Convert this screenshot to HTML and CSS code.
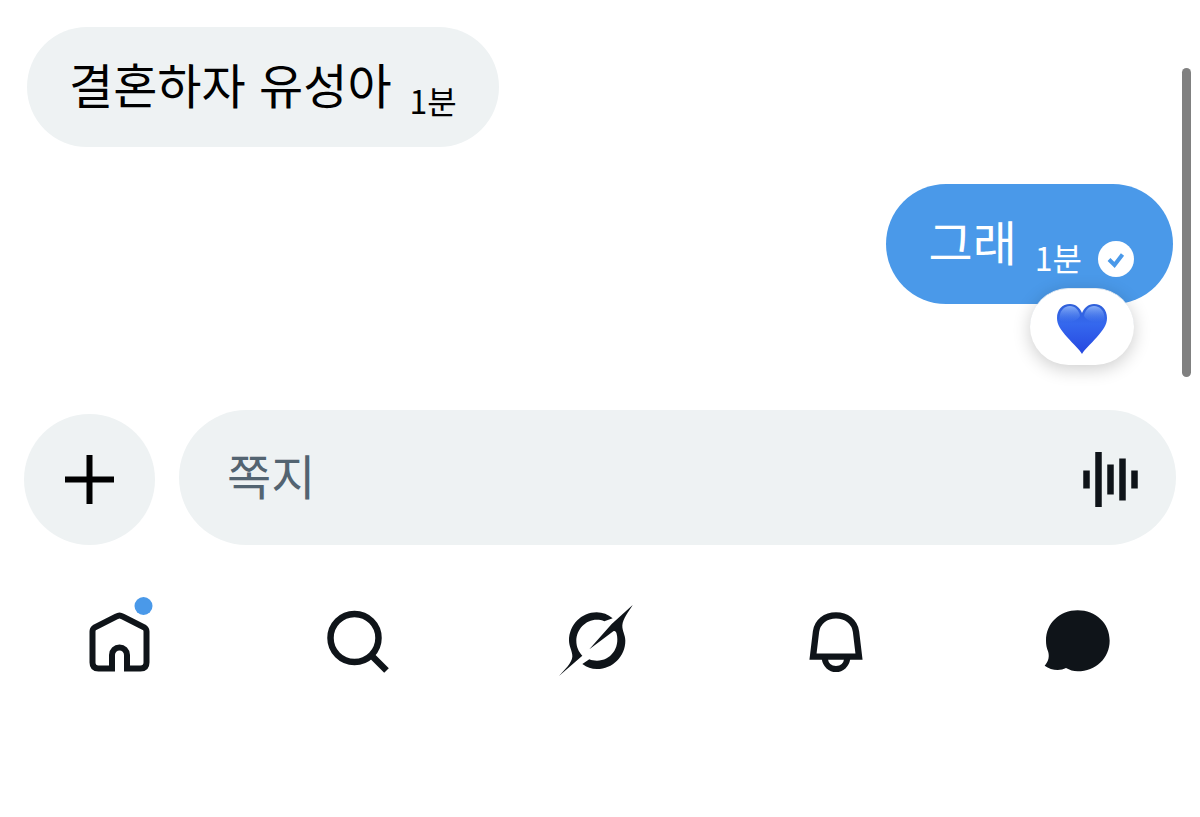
FILE: index.html
```html
<!DOCTYPE html>
<html lang="ko">
<head>
  <meta charset="UTF-8" />
  <meta name="viewport" content="width=device-width, initial-scale=1.0"/>
  <title>쪽지</title>
  <link rel="stylesheet" href="styles.css">
</head>
<body>

  <main class="chat">
    <div class="bubble received">
      <span class="message">결혼하자 유성아</span>
      <time class="time">1분</time>
    </div>

    <div class="bubble sent">
      <span class="message">그래</span>
      <time class="time">1분</time>
      <svg class="check" viewBox="0 0 36 36" aria-hidden="true">
        <circle cx="18" cy="18" r="18" fill="#fff"/>
        <path d="M11 18.500l5.500 5.500 8-10.500" fill="none" stroke="#4a99e9" stroke-width="4"/>
      </svg>
      <button class="reaction" type="button" aria-label="파란 하트">
        <svg class="heart" viewBox="0 0 50 50" aria-hidden="true">
          <defs>
            <linearGradient id="heartFill" x1="0" y1="0" x2="0" y2="1">
              <stop offset="0" stop-color="#2f5fd8"/>
              <stop offset="0.4" stop-color="#3568ee"/>
              <stop offset="1" stop-color="#2547e0"/>
            </linearGradient>
            <linearGradient id="heartShine" x1="0" y1="0" x2="0" y2="1">
              <stop offset="0" stop-color="#9dc2ff" stop-opacity="0.8"/>
              <stop offset="1" stop-color="#5a8ff5" stop-opacity="0"/>
            </linearGradient>
          </defs>
          <path d="M25 50C23 46 17 41 10 33 4 26 0 21 0 14 0 6 5 0 13 0c6 0 10 4 12 9 2-5 6-9 12-9 8 0 13 6 13 14 0 7-4 12-10 19-7 8-13 13-15 17z" fill="url(#heartFill)"/>
          <path d="M2.500 16C2 7 7 2 13 2c5 0 9 4 10 10-4 6-14 9-20.500 4z" fill="url(#heartShine)"/>
          <path d="M47.500 16C48 7 43 2 37 2c-5 0-9 4-10 10 4 6 14 9 20.500 4z" fill="url(#heartShine)"/>
        </svg>
      </button>
    </div>

    <div class="scrollbar"></div>
  </main>

  <form class="composer">
    <button class="add" type="button" aria-label="추가">
      <svg class="plus" viewBox="0 0 49 49" aria-hidden="true">
        <path d="M24.500 0v49M0 24.500h49" stroke="#000" stroke-width="6"/>
      </svg>
    </button>
    <div class="field">
      <input class="input" type="text" placeholder="쪽지" aria-label="쪽지">
      <button class="voice" type="button" aria-label="음성">
        <svg class="wave" viewBox="0 0 55 55" aria-hidden="true">
          <path d="M3.500 18.500v18M15.500 0v55M27.500 12.500v30M39.500 6.500v42M51.500 18.500v18" stroke="#0f1419" stroke-width="6.500"/>
        </svg>
      </button>
    </div>
  </form>

  <nav class="tabs">
    <a class="tab" href="#home" aria-label="홈">
      <svg class="icon" viewBox="0 0 71 71" aria-hidden="true">
        <path d="M14.500 63.500H28V50a7.500 7.500 0 0 1 15 0V63.500H56.500q6 0 6-6V26.500q0-2.500-2-3.900L38.500 11.500q-3-2-6 0L10.500 22.600q-2 1.400-2 3.900V57.500q0 6 6 6z" fill="none" stroke="#0f1419" stroke-width="6"/>
        <circle cx="59.500" cy="1" r="9" fill="#4a99e9"/>
      </svg>
    </a>
    <a class="tab" href="#search" aria-label="검색">
      <svg class="icon" viewBox="0 0 71 71" aria-hidden="true">
        <circle cx="31.500" cy="33" r="24" fill="none" stroke="#0f1419" stroke-width="6.500"/>
        <path d="M48 50l15.500 15.500" stroke="#0f1419" stroke-width="6.500"/>
      </svg>
    </a>
    <a class="tab" href="#grok" aria-label="Grok">
      <svg class="icon" viewBox="36 30 213 213" aria-hidden="true">
        <path d="M188 70C174 58 158 52 140 52 94 52 57 90 57 137c0 17 11 33 10 48-1 18-22 38-40 58l70-61C86 171 79 155 79 138c0-35 28-64 61-64 9 0 16 1 23 5z" fill="#0f1419"/>
        <path d="M248 30L185 87l-67 76 72-54c5-3 9 2 10 8 10 42-18 80-59 80-9 0-16-1-23-4l-21 14c14 10 27 15 44 15 47 0 85-38 85-85 0-17-10-30-9-46 2-21 18-39 31-61z" fill="#0f1419"/>
      </svg>
    </a>
    <a class="tab" href="#notifications" aria-label="알림">
      <svg class="icon" viewBox="31 30 213 213" aria-hidden="true">
        <path d="M67 185L76 110C80 80 105 61 136 61s56 19 60 49l9 75z" fill="none" stroke="#0f1419" stroke-width="19"/>
        <path d="M102 190c3 20 17 32 34 32s31-12 34-32" fill="none" stroke="#0f1419" stroke-width="18"/>
      </svg>
    </a>
    <a class="tab" href="#messages" aria-label="쪽지">
      <svg class="icon" viewBox="30 30 213 213" aria-hidden="true">
        <path d="M143 46c54 0 96 39 96 91s-42 92-96 92c-13 0-24-4-35-10-18 10-46 7-64-7 12-13 15-28 10-43-4-11-6-20-6-32 0-52 41-91 95-91z" fill="#0f1419"/>
      </svg>
    </a>
  </nav>

</body>
</html>
```
FILE: styles.css
```css
* {
  box-sizing: border-box;
}

body {
  margin: 0;
  background-color: #fff;
  color: #000;
  font-family: "Noto Sans CJK KR", sans-serif;
}

button {
  padding: 0;
  border: none;
  cursor: pointer;
}

svg {
  display: block;
}

.chat {
  position: relative;
  display: flex;
  flex-direction: column;
  gap: 37px;
  padding: 27px 27px 106px;
}

.bubble {
  position: relative;
  display: flex;
  align-items: flex-end;
  padding: 20px 42px 24px;
  border-radius: 60px;
}

.received {
  align-self: flex-start;
  background-color: #eef2f3;
}

.sent {
  align-self: flex-end;
  padding-right: 39px;
  background-color: #4a99e9;
  color: #fff;
}

.message {
  margin-bottom: 4px;
  font-size: 48px;
  line-height: 72px;
}

.time {
  margin-left: 18px;
  font-size: 32px;
  line-height: 46px;
}

.check {
  width: 36px;
  height: 36px;
  margin-bottom: 3px;
  margin-left: 16px;
}

.reaction {
  position: absolute;
  right: 39px;
  bottom: -61px;
  display: flex;
  align-items: center;
  justify-content: center;
  width: 104px;
  height: 77px;
  padding-top: 3px;
  border-top: 1px solid #e3e9f0;
  border-radius: 39px;
  background-color: #fff;
  box-shadow: 0 4px 18px rgba(0, 0, 0, 0.2);
}

.heart {
  width: 50px;
  height: 50px;
}

.scrollbar {
  position: absolute;
  top: 68px;
  right: 9px;
  width: 9px;
  height: 309px;
  border-radius: 5px;
  background-color: #808080;
}

.composer {
  display: flex;
  align-items: flex-end;
  gap: 24px;
  padding: 0 24px;
}

.add {
  display: flex;
  align-items: center;
  justify-content: center;
  flex: none;
  width: 131px;
  height: 131px;
  border-radius: 50%;
  background-color: #eef2f3;
}

.plus {
  width: 49px;
  height: 49px;
}

.field {
  display: flex;
  align-items: center;
  flex: 1;
  padding: 32px 38px 28px 48px;
  border-radius: 68px;
  background-color: #eef2f3;
}

.input {
  flex: 1;
  min-width: 0;
  height: 75px;
  padding: 0 0 12px;
  border: none;
  outline: none;
  background: none;
  color: #0f1419;
  font-family: inherit;
  font-size: 48px;
}

.input::placeholder {
  color: #536471;
  opacity: 1;
}

.voice {
  background: none;
}

.wave {
  width: 55px;
  height: 55px;
}

.tabs {
  display: flex;
  padding: 60px 5px 60px 0;
}

.tab {
  display: flex;
  flex: 1;
  justify-content: center;
}

.icon {
  width: 71px;
  height: 71px;
  overflow: visible;
}
```
